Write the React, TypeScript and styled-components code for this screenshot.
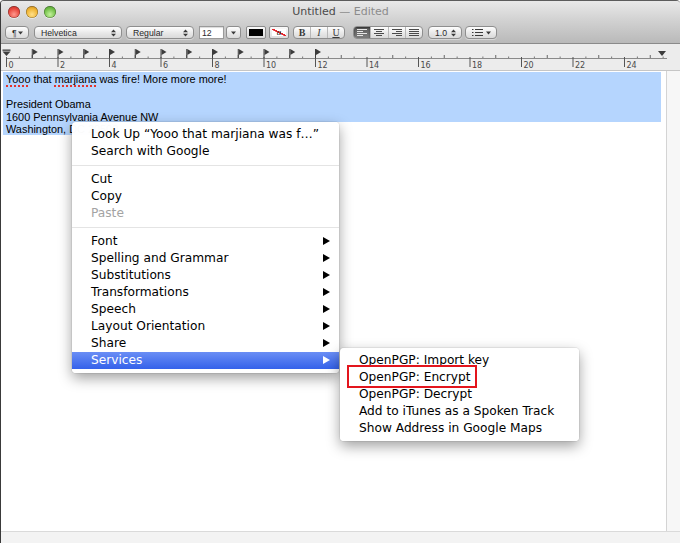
import React from "react";
import styled, { createGlobalStyle, css } from "styled-components";

const GlobalStyle = createGlobalStyle`
  html, body {
    margin: 0;
    padding: 0;
    background: #ffffff;
  }
  * {
    box-sizing: border-box;
  }
`;

const UNIT = 25.75;
const X0 = 6;

const Window = styled.div`
  position: relative;
  width: 680px;
  height: 543px;
  display: flex;
  flex-direction: column;
  overflow: hidden;
  border-left: 1px solid #3a3a3a;
  border-top: 1px solid #5c5c5c;
  border-radius: 4px 4px 0 0;
  background: #f4f4f4;
  font-family: "DejaVu Sans", sans-serif;
`;

const Header = styled.div`
  display: flex;
  flex-direction: column;
  background: linear-gradient(#e9e9e9, #d2d2d2 45%, #b9b9b9);
  border-bottom: 1px solid #8a8a8a;
`;

const TitleBar = styled.div`
  height: 21px;
  display: grid;
  grid-template-columns: 1fr auto 1fr;
  align-items: center;
`;

const Lights = styled.div`
  display: flex;
  gap: 6px;
  padding-left: 7px;
`;

const Light = styled.span<{ $hi: string; $mid: string; $lo: string }>`
  width: 12px;
  height: 12px;
  border-radius: 50%;
  background: radial-gradient(
    circle at 50% 70%,
    ${(p) => p.$hi} 0%,
    ${(p) => p.$mid} 55%,
    ${(p) => p.$lo} 100%
  );
  box-shadow: inset 0 0 0 0.5px rgba(0, 0, 0, 0.45), 0 1px 0 rgba(255, 255, 255, 0.5);
`;

const Title = styled.div`
  font-size: 11px;
  color: #4a4a4a;
  white-space: nowrap;
`;

const Edited = styled.span`
  color: #8c8c8c;
`;

const Toolbar = styled.div`
  height: 21px;
  display: flex;
  align-items: center;
  padding-left: 4px;
  font-family: "Liberation Sans", Arial, sans-serif;
  font-size: 8.7px;
  color: #2a2a2a;
`;

const Control = styled.div<{ $w: number; $ml?: number }>`
  width: ${(p) => p.$w}px;
  height: 13px;
  margin-left: ${(p) => p.$ml ?? 0}px;
  display: flex;
  align-items: center;
  justify-content: space-between;
  padding: 0 5px 0 6px;
  border: 1px solid #8e8e8e;
  border-radius: 4px;
  background: linear-gradient(#fefefe, #e8e8e8 55%, #dadada);
  box-shadow: 0 1px 0 rgba(255, 255, 255, 0.4);
`;

const SizeCombo = styled.div<{ $ml: number }>`
  width: 42px;
  height: 13px;
  margin-left: ${(p) => p.$ml}px;
  display: flex;
`;

const SizeField = styled.div`
  width: 25px;
  height: 13px;
  border: 1px solid #9a9a9a;
  background: #ffffff;
  box-shadow: inset 0 1px 1px rgba(0, 0, 0, 0.15);
  padding-left: 2px;
  display: flex;
  align-items: center;
`;

const SizeButton = styled.div`
  flex: 1;
  margin-left: 2px;
  height: 13px;
  display: flex;
  align-items: center;
  justify-content: center;
  border: 1px solid #8e8e8e;
  border-radius: 3px;
  background: linear-gradient(#fefefe, #e8e8e8 55%, #dadada);
`;

const Well = styled.div<{ $ml: number }>`
  width: 20px;
  height: 13px;
  margin-left: ${(p) => p.$ml}px;
  padding: 2px;
  border: 1px solid #8a8a8a;
  border-radius: 2px;
  background: linear-gradient(#fafafa, #dcdcdc);
  display: flex;
`;

const WellFill = styled.div<{ $color: string }>`
  flex: 1;
  background: ${(p) => p.$color};
  display: flex;
  align-items: center;
  justify-content: center;
`;

const NoColor = styled(WellFill)`
  font-family: "Liberation Serif", serif;
  font-style: italic;
  font-size: 9px;
  line-height: 1;
  color: #222;
  background: linear-gradient(
    to top right,
    #ffffff 44%,
    #e4252b 45%,
    #e4252b 56%,
    #ffffff 57%
  );
`;

const Segmented = styled.div<{ $w: number; $ml: number }>`
  width: ${(p) => p.$w}px;
  height: 13px;
  margin-left: ${(p) => p.$ml}px;
  display: flex;
  border: 1px solid #8e8e8e;
  border-radius: 4px;
  overflow: hidden;
  background: linear-gradient(#fefefe, #e8e8e8 55%, #dadada);
`;

const Segment = styled.div<{ $active?: boolean }>`
  flex: 1;
  display: flex;
  align-items: center;
  justify-content: center;
  font-family: "Liberation Serif", serif;
  font-size: 10px;
  color: #3a3a3a;

  & + & {
    border-left: 1px solid #b8b8b8;
  }

  ${(p) =>
    p.$active &&
    css`
      background: linear-gradient(#5a5a5a, #7e7e7e);
      box-shadow: inset 0 1px 2px rgba(0, 0, 0, 0.5);
    `}
`;

const Bold = styled.span`
  font-weight: bold;
`;

const Italic = styled.span`
  font-style: italic;
`;

const Under = styled.span`
  text-decoration: underline;
`;

const RulerBar = styled.div`
  height: 27px;
  background: #ececec;
  border-bottom: 1px solid #c6c6c6;
`;

const Body = styled.div`
  flex: 1;
  display: flex;
  min-height: 0;
`;

const TextView = styled.div`
  width: 665px;
  background: #ffffff;
  padding: 1px 0 0 2px;
  font-family: "Liberation Sans", Arial, sans-serif;
  font-size: 10.9px;
  line-height: 12.5px;
  color: #000000;
`;

const Selection = styled.div`
  width: 658px;
  background: #b5d5fe;
`;

const Line = styled.div`
  height: 12.5px;
  padding: 1px 0 0 3px;
  white-space: pre;
`;

const PartialLine = styled.span`
  display: inline-block;
  height: 12.5px;
  padding: 1px 0 0 3px;
  background: #b5d5fe;
  white-space: pre;
`;

const Misspelled = styled.span`
  text-decoration: underline dotted #e2332b;
  text-decoration-thickness: 2px;
  text-underline-offset: 2px;
`;

const Scroller = styled.div`
  flex: 1;
  background: #f7f7f7;
  border-left: 1px solid #d4d4d4;
`;

const BottomBar = styled.div`
  height: 12px;
  background: #f3f3f3;
  border-top: 1px solid #dadada;
`;

const Menu = styled.div<{ $left: string; $top: number; $w: number }>`
  position: absolute;
  left: ${(p) => p.$left};
  top: ${(p) => p.$top}px;
  width: ${(p) => p.$w}px;
  padding: 4px 0;
  background: rgba(255, 255, 255, 0.98);
  border-radius: 4px;
  box-shadow: 0 0 0 1px rgba(0, 0, 0, 0.06), 0 5px 14px rgba(0, 0, 0, 0.38);
  font-family: "DejaVu Sans", sans-serif;
  font-size: 12.2px;
  z-index: 2;
`;

const Item = styled.div<{ $active?: boolean; $disabled?: boolean }>`
  position: relative;
  height: 17px;
  display: flex;
  align-items: center;
  justify-content: space-between;
  padding: 0 9px 1px 19px;
  white-space: nowrap;
  color: ${(p) => (p.$disabled ? "#a3a3a3" : "#000000")};

  ${(p) =>
    p.$active &&
    css`
      color: #ffffff;
      background: linear-gradient(#6a8ef5, #3461ea);
    `}
`;

const Separator = styled.div`
  height: 1px;
  margin: 5px 0;
  background: #e4e4e4;
`;

const Callout = styled.span`
  position: absolute;
  left: 7px;
  top: -4px;
  width: 130px;
  height: 23px;
  border: 2px solid #e3151d;
`;

const UpDown = () => (
  <svg width="5" height="8" viewBox="0 0 5 8">
    <path d="M0 3.3 L2.5 0.5 L5 3.3 Z M0 4.7 L2.5 7.5 L5 4.7 Z" fill="#3a3a3a" />
  </svg>
);

const DropArrow = () => (
  <svg width="5" height="4" viewBox="0 0 5 4">
    <path d="M0 0.5 H5 L2.5 3.5 Z" fill="#3a3a3a" />
  </svg>
);

const SubArrow = () => (
  <svg width="7" height="8" viewBox="0 0 7 8">
    <path d="M0 0 L7 4 L0 8 Z" fill="currentColor" />
  </svg>
);

type Align = "left" | "center" | "right" | "justify";

const AlignIcon = ({ kind, color }: { kind: Align; color: string }) => {
  const widths = [10, 6, 10, 6];
  return (
    <svg width="10" height="7" viewBox="0 0 10 7">
      {widths.map((w, i) => {
        const width = kind === "justify" ? 10 : w;
        const x = kind === "left" ? 0 : kind === "right" ? 10 - width : (10 - width) / 2;
        return <rect key={i} x={x} y={i * 2} width={width} height={1} fill={color} />;
      })}
    </svg>
  );
};

const ListIcon = () => (
  <svg width="11" height="7" viewBox="0 0 11 7">
    {[0, 3, 6].map((y) => (
      <g key={y} fill="#3a3a3a">
        <rect x={0} y={y} width={1.5} height={1} />
        <rect x={3} y={y} width={8} height={1} />
      </g>
    ))}
  </svg>
);

const Ruler = () => {
  const ticks = [];
  for (let i = 0; i <= 51; i++) {
    const x = X0 + (i * UNIT) / 2 - 0.5;
    if (i % 4 === 0) {
      ticks.push(
        <g key={i}>
          <line x1={x} y1={13} x2={x} y2={23} stroke="#555" strokeWidth={1} />
          <text x={x + 2} y={24} fontFamily="DejaVu Sans" fontSize={8} fill="#4a4a4a">
            {i / 2}
          </text>
        </g>
      );
    } else if (i % 2 === 0) {
      ticks.push(<line key={i} x1={x} y1={11} x2={x} y2={14} stroke="#666" strokeWidth={1} />);
    } else {
      ticks.push(<line key={i} x1={x} y1={12.5} x2={x} y2={14} stroke="#777" strokeWidth={1} />);
    }
  }
  const flags = [];
  for (let k = 1; k <= 12; k++) {
    const x = X0 + k * UNIT - 1;
    flags.push(
      <g key={k} fill="#3c3c3c">
        <rect x={x} y={5} width={1} height={9} />
        <path d={`M${x + 1} 5 L${x + 6} 8 L${x + 1} 11 Z`} />
      </g>
    );
  }
  return (
    <svg width="679" height="26" viewBox="0 0 679 26">
      <line x1={X0 - 1} y1={14.5} x2={666} y2={14.5} stroke="#8a8a8a" strokeWidth={1} />
      {ticks}
      {flags}
      <g fill="#3c3c3c">
        <rect x={1.5} y={5.5} width={8} height={1.3} />
        <path d="M1.5 7.5 H9.5 L5.5 12 Z" />
        <path d="M657 7 H665 L661 12 Z" />
      </g>
    </svg>
  );
};

const services = [
  "OpenPGP: Import key",
  "OpenPGP: Encrypt",
  "OpenPGP: Decrypt",
  "Add to iTunes as a Spoken Track",
  "Show Address in Google Maps",
];

const submenus = [
  "Font",
  "Spelling and Grammar",
  "Substitutions",
  "Transformations",
  "Speech",
  "Layout Orientation",
  "Share",
];

export default function App() {
  return (
    <>
      <GlobalStyle />
      <Window>
        <Header>
          <TitleBar>
            <Lights>
              <Light $hi="#ff9a8f" $mid="#e8473d" $lo="#a7231b" />
              <Light $hi="#ffe08a" $mid="#f0b433" $lo="#b07614" />
              <Light $hi="#c4f29c" $mid="#74c14a" $lo="#3f8a22" />
            </Lights>
            <Title>
              Untitled <Edited>— Edited</Edited>
            </Title>
            <div />
          </TitleBar>
          <Toolbar>
            <Control $w={24}>
              <span>¶</span>
              <DropArrow />
            </Control>
            <Control $w={88} $ml={5}>
              <span>Helvetica</span>
              <UpDown />
            </Control>
            <Control $w={68} $ml={4}>
              <span>Regular</span>
              <UpDown />
            </Control>
            <SizeCombo $ml={5}>
              <SizeField>12</SizeField>
              <SizeButton>
                <DropArrow />
              </SizeButton>
            </SizeCombo>
            <Well $ml={5}>
              <WellFill $color="#000000" />
            </Well>
            <Well $ml={3}>
              <NoColor $color="#ffffff">a</NoColor>
            </Well>
            <Segmented $w={52} $ml={4}>
              <Segment>
                <Bold>B</Bold>
              </Segment>
              <Segment>
                <Italic>I</Italic>
              </Segment>
              <Segment>
                <Under>U</Under>
              </Segment>
            </Segmented>
            <Segmented $w={70} $ml={8}>
              <Segment $active>
                <AlignIcon kind="left" color="#e6e6e6" />
              </Segment>
              <Segment>
                <AlignIcon kind="center" color="#4a4a4a" />
              </Segment>
              <Segment>
                <AlignIcon kind="right" color="#4a4a4a" />
              </Segment>
              <Segment>
                <AlignIcon kind="justify" color="#4a4a4a" />
              </Segment>
            </Segmented>
            <Control $w={34} $ml={5}>
              <span>1.0</span>
              <UpDown />
            </Control>
            <Control $w={32} $ml={3}>
              <ListIcon />
              <DropArrow />
            </Control>
          </Toolbar>
        </Header>
        <RulerBar>
          <Ruler />
        </RulerBar>
        <Body>
          <TextView>
            <Selection>
              <Line>
                <Misspelled>Yooo</Misspelled> that <Misspelled>marjiana</Misspelled> was fire! More
                more more!
              </Line>
              <Line> </Line>
              <Line>President Obama</Line>
              <Line>1600 Pennsylvania Avenue NW</Line>
            </Selection>
            <PartialLine>Washington, DC 20500</PartialLine>
          </TextView>
          <Scroller />
        </Body>
        <BottomBar />

        <Menu $left="71px" $top={121} $w={267}>
          <Item>Look Up “Yooo that marjiana was f…”</Item>
          <Item>Search with Google</Item>
          <Separator />
          <Item>Cut</Item>
          <Item>Copy</Item>
          <Item $disabled>Paste</Item>
          <Separator />
          {submenus.map((label) => (
            <Item key={label}>
              <span>{label}</span>
              <SubArrow />
            </Item>
          ))}
          <Item $active>
            <span>Services</span>
            <SubArrow />
            <Menu $left="calc(100% + 1px)" $top={-4} $w={239}>
              {services.map((label) => (
                <Item key={label}>
                  {label}
                  {label === "OpenPGP: Encrypt" && <Callout />}
                </Item>
              ))}
            </Menu>
          </Item>
        </Menu>
      </Window>
    </>
  );
}
